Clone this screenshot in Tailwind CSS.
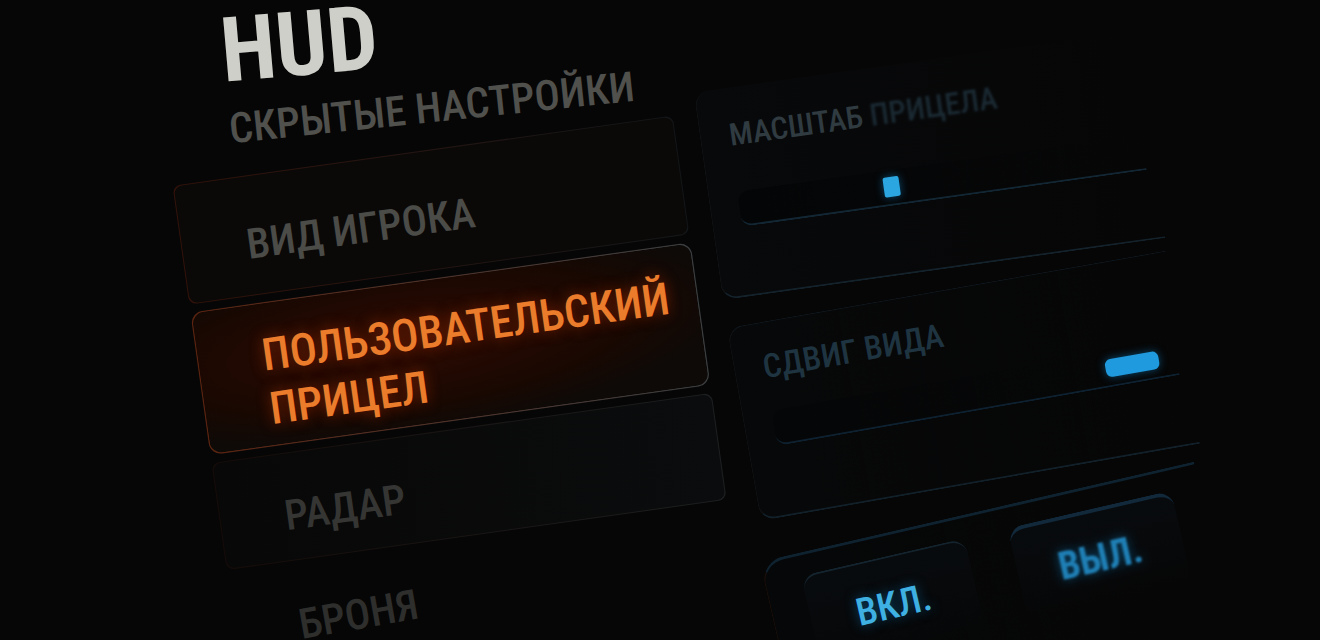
<!DOCTYPE html>
<html lang="ru">
  <head>
    <meta charset="UTF-8" />
    <meta name="viewport" content="width=device-width, initial-scale=1.0" />
    <title>HUD — скрытые настройки</title>
    <script src="https://cdn.jsdelivr.net/npm/@tailwindcss/browser@4"></script>
  </head>
  <body
    class="h-screen overflow-hidden bg-[#060606] font-['Roboto_Condensed','Liberation_Sans_Narrow','Roboto',sans-serif] font-medium text-[#4b4b48]"
  >
    <!-- Tilted screen -->
    <div
      class="grid w-screen origin-top-left -rotate-8 grid-cols-[43%_38%] gap-x-6 pl-[11%]"
    >
      <!-- Menu -->
      <section>
        <header class="h-[208px] pt-9 pl-16">
          <h1 class="origin-bottom-left rotate-3 text-[90px] leading-[92px] font-bold text-[#cfcfca]">HUD</h1>
          <p class="origin-left rotate-2 text-[42px] leading-[64px] whitespace-nowrap text-[#50504d]">СКРЫТЫЕ НАСТРОЙКИ</p>
        </header>
        <nav class="flex flex-col gap-2" aria-label="Настройки HUD">
          <div class="rounded-lg bg-linear-to-r from-[#32120a] to-[#131618] p-px">
            <a href="#view" class="flex h-[118px] items-center rounded-lg bg-[#0a0908] pt-4 pl-16 text-[42px]">ВИД ИГРОКА</a>
          </div>
          <div class="rounded-xl bg-linear-to-r from-[#5c2410] to-[#3c4042] p-px">
            <a
              href="#crosshair"
              aria-current="page"
              class="flex h-[142px] items-center rounded-xl bg-[#0d0a08] bg-[radial-gradient(ellipse_at_40%_40%,#2e0b02,#190802_55%,transparent_80%)] pt-4 pl-16 text-[45px] leading-[54px] text-[#ea7c2c] [text-shadow:0_0_14px_#7a2204]"
              >ПОЛЬЗОВАТЕЛЬСКИЙ<br />ПРИЦЕЛ</a
            >
          </div>
          <div class="rounded-lg bg-linear-to-r from-[#150b08] to-[#1c1f20] p-px">
            <a href="#radar" class="flex h-[106px] items-center rounded-lg bg-linear-to-r from-[#080808] to-[#0b0c0d] pt-4 pl-16 text-[42px] text-[#353533]">РАДАР</a>
          </div>
          <a href="#armor" class="flex h-[100px] origin-left -rotate-2 items-center pt-4 pl-16 text-[42px] text-[#2e2e2d]">БРОНЯ</a>
        </nav>
      </section>

      <!-- Controls -->
      <section class="pt-[188px]">
        <div class="h-[210px] rounded-l-2xl border-b-2 border-l border-b-[#14222c] border-l-[#101315] bg-linear-to-r from-[#08090b] to-transparent pt-6 pl-7">
          <label for="scale" class="block text-[31px] leading-[48px] whitespace-nowrap text-[#2f3b40]">
            МАСШТАБ <span class="text-[#1a2932] blur-[1px]">ПРИЦЕЛА</span>
          </label>
          <input
            id="scale"
            type="range"
            value="37"
            class="mt-8 block h-9 w-[98%] appearance-none rounded-l-xl border-b-2 border-[#122733] bg-linear-to-r from-[#040506] to-transparent [&::-webkit-slider-thumb]:h-5 [&::-webkit-slider-thumb]:w-4 [&::-webkit-slider-thumb]:appearance-none [&::-webkit-slider-thumb]:rounded-xs [&::-webkit-slider-thumb]:bg-[#2ba6e0] [&::-webkit-slider-thumb]:shadow-[0_0_8px_#0b4a70]"
          />
        </div>

        <div
          class="mt-7 h-[196px] origin-top-left -rotate-2 rounded-l-2xl border-t border-b-2 border-l border-t-[#101920] border-b-[#12202a] border-l-[#101315] bg-linear-to-r from-[#070809] to-transparent pt-5 pl-7"
        >
          <label for="shift" class="block text-[33px] leading-[48px] text-[#1f3441]">СДВИГ ВИДА</label>
          <input
            id="shift"
            type="range"
            value="95"
            class="mt-5 block h-9 w-[98%] appearance-none rounded-l-xl border-b-2 border-[#0e2130] bg-linear-to-r from-[#050607] to-transparent [&::-webkit-slider-thumb]:h-[18px] [&::-webkit-slider-thumb]:w-[54px] [&::-webkit-slider-thumb]:appearance-none [&::-webkit-slider-thumb]:rounded-md [&::-webkit-slider-thumb]:bg-[#1f9ade] [&::-webkit-slider-thumb]:shadow-[0_0_8px_#0b4a70]"
          />
        </div>

        <div
          class="mt-10 flex h-[180px] origin-top-left -rotate-5 gap-11 rounded-tl-3xl border-t-3 border-l border-t-[#0e2230] border-l-[#1a0f0a] bg-linear-to-r from-[#060708] to-transparent pt-5 pl-9"
        >
          <button
            type="button"
            class="h-24 w-[168px] rounded-2xl border-t-2 border-[#14242e] bg-linear-to-b from-[#080b0e] to-transparent text-[38px] text-[#3fb0e2] [text-shadow:0_0_12px_#0b4a70]"
          >
            ВКЛ.
          </button>
          <button
            type="button"
            class="h-24 w-[168px] rounded-2xl border-t-4 border-[#11293a] bg-linear-to-b from-[#080b0e] to-transparent text-[38px] font-bold text-[#1f7fb5] [text-shadow:0_0_12px_#0b4a70]"
          >
            <span class="blur-[1px]">ВЫЛ.</span>
          </button>
        </div>
      </section>
    </div>
  </body>
</html>
